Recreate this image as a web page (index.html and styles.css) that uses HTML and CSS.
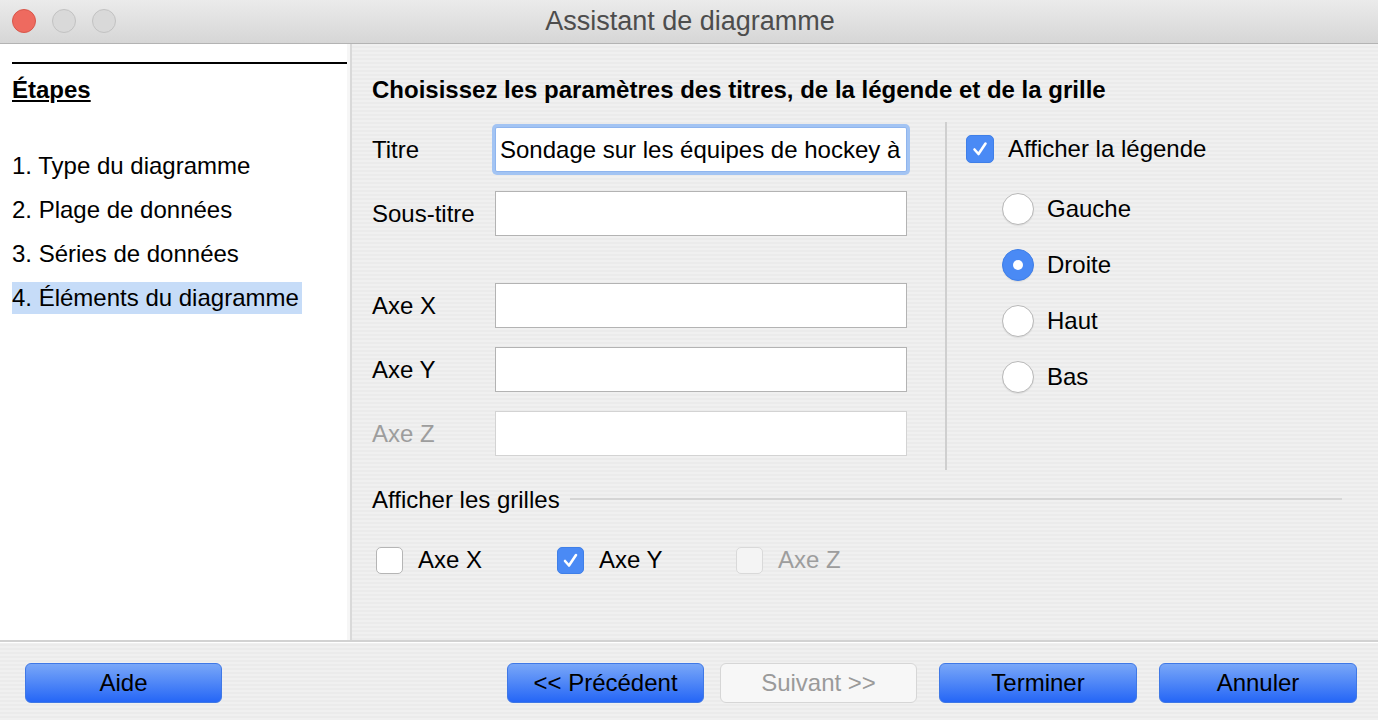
FILE: index.html
```html
<!DOCTYPE html>
<html lang="fr">
<head>
<meta charset="utf-8">
<title>Assistant de diagramme</title>
<link rel="stylesheet" href="styles.css">
</head>
<body>
<div class="window">
  <div class="titlebar">
    <div class="lights">
      <span class="light red"></span>
      <span class="light gray"></span>
      <span class="light gray"></span>
    </div>
    <div class="title">Assistant de diagramme</div>
  </div>
  <div class="main">
    <aside class="steps">
      <div class="steps-rule"></div>
      <div class="steps-head">Étapes</div>
      <ul class="steps-list">
        <li><span class="step">1. Type du diagramme</span></li>
        <li><span class="step">2. Plage de données</span></li>
        <li><span class="step">3. Séries de données</span></li>
        <li><span class="step selected">4. Éléments du diagramme</span></li>
      </ul>
    </aside>
    <section class="content">
      <h1 class="heading">Choisissez les paramètres des titres, de la légende et de la grille</h1>
      <div class="form-area">
        <div class="fields">
          <div class="row"><label class="lbl">Titre</label><input class="field focused" type="text" value="Sondage sur les équipes de hockey à Montréal"></div>
          <div class="row"><label class="lbl">Sous-titre</label><input class="field" type="text" value=""></div>
          <div class="row spaced"><label class="lbl">Axe X</label><input class="field" type="text" value=""></div>
          <div class="row"><label class="lbl">Axe Y</label><input class="field" type="text" value=""></div>
          <div class="row"><label class="lbl disabled">Axe Z</label><input class="field disabled-field" type="text" value="" disabled></div>
        </div>
        <div class="legend">
          <div class="check-row">
            <span class="cb checked"><svg viewBox="0 0 28 28" width="28" height="28"><path d="M8.5 14.5 L12.5 19 L19.5 8.5" fill="none" stroke="#fff" stroke-width="2.6" stroke-linecap="round" stroke-linejoin="round"/></svg></span>
            <span class="cb-text">Afficher la légende</span>
          </div>
          <div class="radios">
            <div class="radio-row"><span class="radio"></span><span class="radio-text">Gauche</span></div>
            <div class="radio-row"><span class="radio on"><span class="dot"></span></span><span class="radio-text">Droite</span></div>
            <div class="radio-row"><span class="radio"></span><span class="radio-text">Haut</span></div>
            <div class="radio-row"><span class="radio"></span><span class="radio-text">Bas</span></div>
          </div>
        </div>
      </div>
      <div class="grid-group">
        <div class="group-head"><span class="group-title">Afficher les grilles</span><span class="group-line"></span></div>
        <div class="grid-checks">
          <div class="gc"><span class="cb small"></span><span class="cb-text">Axe X</span></div>
          <div class="gc"><span class="cb small checked"><svg viewBox="0 0 27 27" width="27" height="27"><path d="M8 14 L12 18.5 L19 8" fill="none" stroke="#fff" stroke-width="2.6" stroke-linecap="round" stroke-linejoin="round"/></svg></span><span class="cb-text">Axe Y</span></div>
          <div class="gc"><span class="cb small off"></span><span class="cb-text disabled">Axe Z</span></div>
        </div>
      </div>
    </section>
  </div>
  <footer class="footer">
    <button class="btn">Aide</button>
    <div class="spacer"></div>
    <button class="btn">&lt;&lt; Précédent</button>
    <button class="btn disabled-btn gap-s">Suivant &gt;&gt;</button>
    <button class="btn wide gap-l">Terminer</button>
    <button class="btn wide gap-l">Annuler</button>
  </footer>
</div>
</body>
</html>
```

FILE: styles.css
```css
* { box-sizing: border-box; }
html, body { margin: 0; padding: 0; }
body {
  font-family: "Liberation Sans", Arial, sans-serif;
  font-size: 24px;
  color: #000;
  background: #ececec;
}
.window {
  width: 1378px;
  height: 720px;
  display: flex;
  flex-direction: column;
  overflow: hidden;
}
.titlebar {
  height: 44px;
  flex: none;
  display: flex;
  align-items: center;
  background: linear-gradient(#ebebeb, #d6d6d6);
  border-bottom: 1px solid #b3b3b3;
}
.lights {
  display: flex;
  gap: 16px;
  padding-left: 12px;
  padding-bottom: 1px;
}
.light {
  width: 24px;
  height: 24px;
  border-radius: 50%;
  display: block;
}
.light.red { background: #ee6a5f; border: 1px solid #d8564a; }
.light.gray { background: #d9d9d9; border: 1px solid #c2c2c2; }
.title {
  flex: 1;
  text-align: center;
  font-family: "Liberation Sans", Arial, sans-serif;
  font-size: 27px;
  color: #4d4d4d;
  margin-left: -114px;
  padding-bottom: 1px;
}
.main {
  flex: 1;
  display: flex;
  min-height: 0;
}
.steps {
  width: 352px;
  flex: none;
  background: #fff;
  padding: 18px 0 0 12px;
  border-right: 2px solid #d9d9d9;
  box-shadow: inset -3px 0 0 #f6f6f6;
}
.steps-rule {
  height: 2px;
  background: #000;
  margin-right: 3px;
}
.steps-head {
  margin-top: 12px;
  font-weight: bold;
  text-decoration: underline;
  line-height: 28px;
}
.steps-list {
  list-style: none;
  margin: 46px 0 0 0;
  padding: 0;
  display: flex;
  flex-direction: column;
  gap: 12px;
}
.step {
  display: inline-block;
  line-height: 32px;
  padding-right: 3px;
}
.step.selected { background: #c6dcf8; }
.content {
  flex: 1;
  padding: 32px 36px 0 20px;
  background: repeating-linear-gradient(#f0f0f0 0 2px, #ebebeb 2px 4px);
}
.heading {
  margin: 0;
  font-size: 24px;
  font-weight: bold;
  line-height: 28px;
}
.form-area {
  margin-top: 18px;
  display: flex;
  height: 348px;
}
.fields {
  width: 575px;
  flex: none;
  padding: 5px 38px 0 0;
  border-right: 2px solid #cfcfcf;
  display: flex;
  flex-direction: column;
  gap: 19px;
}
.row {
  display: flex;
  align-items: center;
  height: 45px;
}
.row.spaced { margin-top: 28px; }
.lbl {
  width: 123px;
  flex: none;
  line-height: 28px;
}
.lbl.disabled, .cb-text.disabled { color: #9d9d9d; }
.field {
  width: 412px;
  flex: none;
  height: 45px;
  border: 1px solid #b3b3b3;
  background: #fff;
  font-family: "Liberation Sans", Arial, sans-serif;
  font-size: 24px;
  padding: 0 4px;
  color: #000;
  outline: none;
  border-radius: 0;
}
.field.focused {
  border-color: #8fb5ee;
  box-shadow: 0 0 0 3px #a3c4f3;
  border-radius: 2px;
}
.field.disabled-field {
  border-color: #d3d3d3;
  background: #fff;
}
.legend {
  padding: 13px 0 0 19px;
}
.check-row {
  display: flex;
  align-items: center;
  gap: 14px;
  height: 28px;
}
.cb {
  width: 28px;
  height: 28px;
  flex: none;
  border-radius: 5px;
  background: #fff;
  border: 1px solid #b5b5b5;
  display: block;
}
.cb svg { display: block; }
.cb.checked {
  background: #4a8af5;
  border-color: #3f7fe8;
}
.cb.small { width: 27px; height: 27px; }
.cb.small.checked svg { margin: -1px; }
.cb.off {
  background: #f4f4f4;
  border-color: #d9d9d9;
}
.check-row .cb.checked svg { margin: -1px; }
.cb-text { line-height: 28px; }
.radios {
  margin-top: 30px;
  padding-left: 36px;
  display: flex;
  flex-direction: column;
  gap: 24px;
}
.radio-row {
  display: flex;
  align-items: center;
  gap: 13px;
  height: 32px;
}
.radio {
  width: 32px;
  height: 32px;
  border-radius: 50%;
  background: #fff;
  border: 1px solid #b8b8b8;
  box-shadow: 0 1px 1px rgba(0,0,0,0.08);
  display: flex;
  align-items: center;
  justify-content: center;
  flex: none;
}
.radio.on {
  background: #4a8af5;
  border-color: #3f7fe8;
}
.dot {
  width: 10px;
  height: 10px;
  border-radius: 50%;
  background: #fff;
}
.grid-group {
  margin-top: 16px;
}
.group-head {
  display: flex;
  align-items: center;
  gap: 10px;
  height: 28px;
}
.group-line {
  flex: 1;
  height: 2px;
  background: #d5d5d5;
  margin-top: -3px;
}
.grid-checks {
  display: flex;
  margin-top: 32px;
  padding-left: 4px;
}
.gc {
  display: flex;
  align-items: center;
  gap: 15px;
  height: 28px;
}
.gc:nth-child(1) { width: 181px; }
.gc:nth-child(2) { width: 179px; }
.footer {
  height: 80px;
  flex: none;
  display: flex;
  align-items: center;
  padding: 3px 21px 0 25px;
  border-top: 2px solid #d2d2d2;
  box-shadow: inset 0 1px 0 #ffffff;
  background: repeating-linear-gradient(#f0f0f0 0 2px, #ebebeb 2px 4px);
}
.spacer { flex: 1; }
.btn {
  width: 197px;
  height: 40px;
  border-radius: 6px;
  border: 1px solid #3f78e6;
  background: linear-gradient(#79a7f8, #2566f6);
  font-family: "Liberation Sans", Arial, sans-serif;
  font-size: 24px;
  color: #000;
  padding: 0;
  flex: none;
}
.btn.wide { width: 198px; }
.btn.disabled-btn {
  background: #f7f7f7;
  border-color: #d6d6d6;
  color: #9a9a9a;
}
.gap-s { margin-left: 16px; }
.gap-l { margin-left: 22px; }
```
